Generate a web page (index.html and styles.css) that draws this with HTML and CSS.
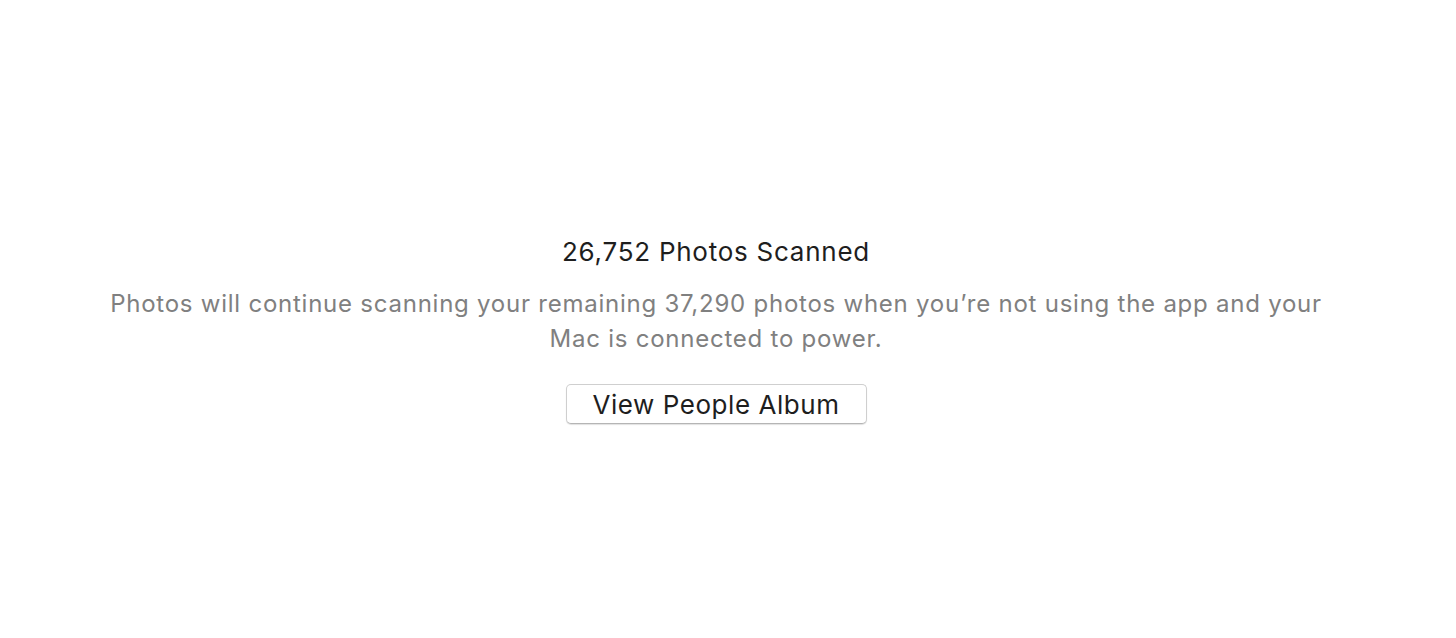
FILE: index.html
```html
<!DOCTYPE html>
<html lang="en">
<head>
<meta charset="utf-8">
<title>People</title>
<link rel="stylesheet" href="styles.css">
</head>
<body>
<main class="screen">
  <h1 class="title">26,752 Photos Scanned</h1>
  <p class="message">Photos will continue scanning your remaining 37,290 photos when you’re not using the app and your Mac is connected to power.</p>
  <button class="btn" type="button">View People Album</button>
</main>
</body>
</html>
```
FILE: styles.css
```css
html, body {
  margin: 0;
  padding: 0;
  background: #ffffff;
}
.screen {
  box-sizing: border-box;
  height: 638px;
  display: flex;
  flex-direction: column;
  align-items: center;
  padding: 237px 24px 0 0;
  font-family: Inter, "Helvetica Neue", Arial, sans-serif;
}
.title {
  margin: 0;
  font-size: 26px;
  line-height: 30px;
  font-weight: 400;
  color: #1e1e1e;
  letter-spacing: 0.75px;
}
.message {
  margin: 19px 0 0;
  max-width: 1250px;
  text-align: center;
  font-size: 24px;
  line-height: 35px;
  color: #808080;
  letter-spacing: 0.76px;
}
.btn {
  margin-top: 28px;
  width: 301px;
  height: 40px;
  box-sizing: border-box;
  font-family: inherit;
  font-size: 26px;
  line-height: 1;
  letter-spacing: 0.55px;
  color: #1e1e1e;
  background: #ffffff;
  border: 1px solid #cfcfcf;
  border-bottom-color: #b5b5b5;
  border-radius: 5px;
  box-shadow: 0 1px 1px rgba(0,0,0,0.12);
  padding: 2px 0 0;
}
```
